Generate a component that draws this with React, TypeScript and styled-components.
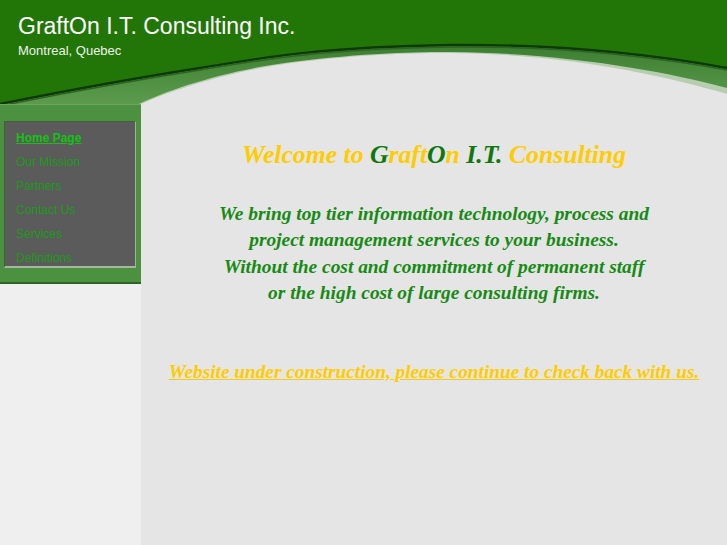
import React from "react";
import styled, { createGlobalStyle } from "styled-components";

const GlobalStyle = createGlobalStyle`
  html, body {
    margin: 0;
    padding: 0;
    background: #e5e5e5;
  }
  #root {
    min-height: 100vh;
  }
`;

const Page = styled.div`
  width: 727px;
  min-height: 545px;
  display: flex;
  flex-direction: column;
  background: #e5e5e5;
  font-family: "Liberation Sans", Arial, sans-serif;
`;

const Header = styled.header`
  position: relative;
  height: 104px;
  padding: 13px 0 0 18px;
  box-sizing: border-box;
  color: #ffffff;
  overflow: hidden;
`;

const HeaderArt = styled.svg`
  position: absolute;
  inset: 0;
  z-index: 0;
`;

const Title = styled.h1`
  position: relative;
  z-index: 1;
  margin: 0;
  font-weight: normal;
  font-size: 23px;
  line-height: 26px;
`;

const Subtitle = styled.div`
  position: relative;
  z-index: 1;
  margin-top: 4px;
  font-size: 13px;
  line-height: 16px;
  color: #eef2ec;
`;

const Body = styled.div`
  flex: 1;
  display: flex;
`;

const Sidebar = styled.aside`
  width: 141px;
  flex-shrink: 0;
  background: #efefef;
`;

const NavFrame = styled.div`
  box-sizing: border-box;
  height: 180px;
  padding: 16px 5px 0 4px;
  background: #4c9140;
  border-top: 1px solid #6aa55c;
  border-bottom: 2px solid #2e6626;
`;

const NavBox = styled.nav`
  box-sizing: border-box;
  height: 147px;
  padding: 4px 0 0 11px;
  background: #5b5b5b;
  border: 1px solid #3f6238;
  border-right-color: #9fb59a;
  border-bottom: 2px solid #a6b6a2;
  display: flex;
  flex-direction: column;
  overflow: hidden;
`;

const NavLink = styled.a<{ $active?: boolean }>`
  display: block;
  font-size: 12px;
  line-height: 24px;
  color: ${({ $active }) => ($active ? "#14c214" : "#1c9c1a")};
  font-weight: ${({ $active }) => ($active ? "bold" : "normal")};
  text-decoration: ${({ $active }) => ($active ? "underline" : "none")};
  cursor: pointer;
`;

const Main = styled.main`
  flex: 1;
  padding: 36px 10px 0;
  text-align: center;
  font-family: "Liberation Serif", "Times New Roman", serif;
  font-style: italic;
  font-weight: bold;
`;

const Welcome = styled.h2`
  margin: 0;
  font-size: 25.7px;
  line-height: 30px;
  font-weight: bold;
  color: #ffcc00;
`;

const Accent = styled.span`
  color: #0f780c;
`;

const Pitch = styled.p`
  margin: 31px 0 0;
  font-size: 19.4px;
  line-height: 26.4px;
  color: #178a15;
`;

const Construction = styled.a`
  display: inline-block;
  margin-top: 53px;
  font-size: 19.3px;
  line-height: 24px;
  color: #ffcc00;
  text-decoration: underline;
  cursor: pointer;
`;

const links = [
  "Home Page",
  "Our Mission",
  "Partners",
  "Contact Us",
  "Services",
  "Definitions",
];

const edge =
  "M0,104 C60,92 130,79 200,68 C260,58 320,47 450,45 C560,44 650,54 727,68";

function Swoosh() {
  return (
    <HeaderArt width="727" height="104" viewBox="0 0 727 104">
      <defs>
        <linearGradient id="band" x1="0" y1="0" x2="0" y2="1">
          <stop offset="0" stopColor="#3c7e31" />
          <stop offset="1" stopColor="#5c9b4e" />
        </linearGradient>
      </defs>
      <rect width="727" height="104" fill="#227607" />
      <path d={`${edge} L727,104 L0,104 Z`} fill="url(#band)" />
      <path
        d="M139,104 C170,89 230,69 300,61 C360,54 400,52 450,52 C560,53 660,70 727,88 L727,104 Z"
        fill="#b6ceaf"
      />
      <path
        d="M141,104 C172,90 232,70 300,62 C360,55 400,53 450,53 C560,54 655,73 727,94 L727,104 Z"
        fill="#e5e5e5"
      />
      <path d={edge} fill="none" stroke="#0e3a06" strokeWidth="2.4" />
      <path
        d="M0,106 C60,94 130,81 200,70 C260,60 320,49 450,47 C560,46 650,56 727,70"
        fill="none"
        stroke="#2d6423"
        strokeWidth="1.5"
      />
    </HeaderArt>
  );
}

export default function App() {
  return (
    <Page>
      <GlobalStyle />
      <Header>
        <Swoosh />
        <Title>GraftOn I.T. Consulting Inc.</Title>
        <Subtitle>Montreal, Quebec</Subtitle>
      </Header>
      <Body>
        <Sidebar>
          <NavFrame>
            <NavBox>
              {links.map((label, i) => (
                <NavLink key={label} $active={i === 0}>
                  {label}
                </NavLink>
              ))}
            </NavBox>
          </NavFrame>
        </Sidebar>
        <Main>
          <Welcome>
            Welcome to <Accent>G</Accent>raft<Accent>O</Accent>n{" "}
            <Accent>I.T.</Accent> Consulting
          </Welcome>
          <Pitch>
            We bring top tier information technology, process and
            <br />
            project management services to your business.
            <br />
            Without the cost and commitment of permanent staff
            <br />
            or the high cost of large consulting firms.
          </Pitch>
          <Construction>
            Website under construction, please continue to check back with us.
          </Construction>
        </Main>
      </Body>
    </Page>
  );
}
